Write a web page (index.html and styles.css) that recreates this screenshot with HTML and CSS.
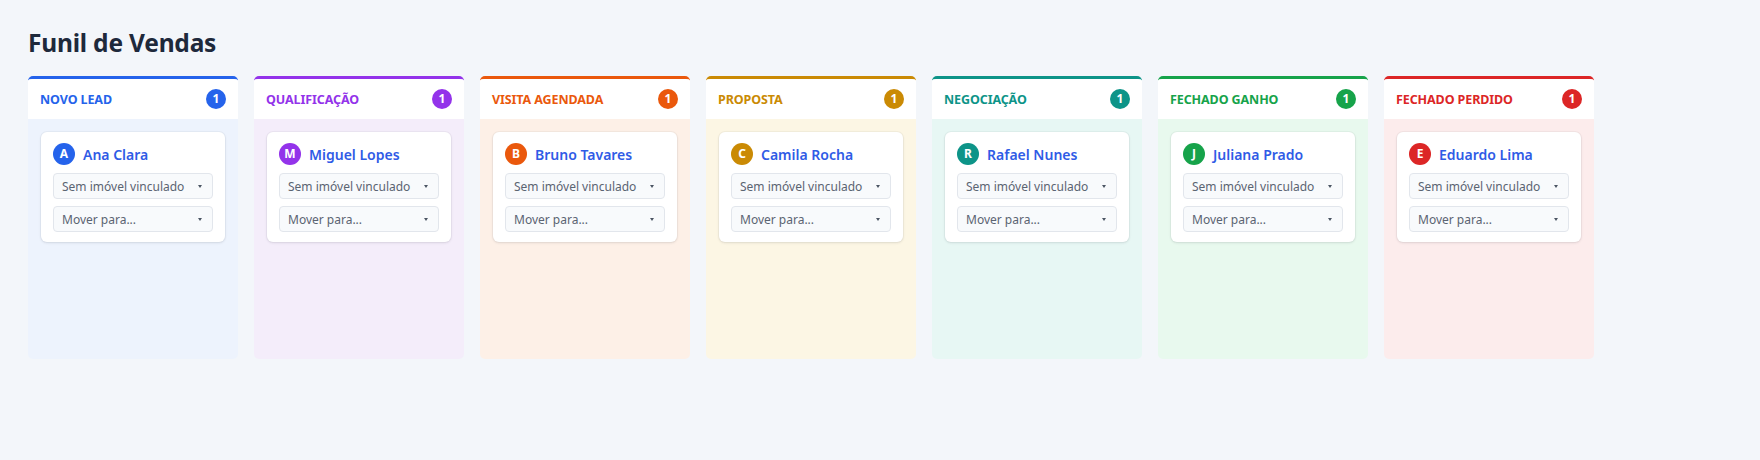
FILE: index.html
```html
<!DOCTYPE html>
<html lang="pt-BR">
<head>
<meta charset="utf-8">
<title>Funil de Vendas</title>
<link rel="stylesheet" href="styles.css">
</head>
<body>
<main class="page">
  <h1 class="title">Funil de Vendas</h1>
  <div class="board">
    <section class="col c-blue">
      <header class="col-head"><span class="col-title">NOVO LEAD</span><span class="badge">1</span></header>
      <div class="col-body">
        <div class="card">
          <div class="lead"><span class="avatar">A</span><span class="name">Ana Clara</span></div>
          <div class="sel"><select><option>Sem imóvel vinculado</option></select><span class="arrow"></span></div>
          <div class="sel"><select><option>Mover para...</option></select><span class="arrow"></span></div>
        </div>
      </div>
    </section>
    <section class="col c-purple">
      <header class="col-head"><span class="col-title">QUALIFICAÇÃO</span><span class="badge">1</span></header>
      <div class="col-body">
        <div class="card">
          <div class="lead"><span class="avatar">M</span><span class="name">Miguel Lopes</span></div>
          <div class="sel"><select><option>Sem imóvel vinculado</option></select><span class="arrow"></span></div>
          <div class="sel"><select><option>Mover para...</option></select><span class="arrow"></span></div>
        </div>
      </div>
    </section>
    <section class="col c-orange">
      <header class="col-head"><span class="col-title">VISITA AGENDADA</span><span class="badge">1</span></header>
      <div class="col-body">
        <div class="card">
          <div class="lead"><span class="avatar">B</span><span class="name">Bruno Tavares</span></div>
          <div class="sel"><select><option>Sem imóvel vinculado</option></select><span class="arrow"></span></div>
          <div class="sel"><select><option>Mover para...</option></select><span class="arrow"></span></div>
        </div>
      </div>
    </section>
    <section class="col c-yellow">
      <header class="col-head"><span class="col-title">PROPOSTA</span><span class="badge">1</span></header>
      <div class="col-body">
        <div class="card">
          <div class="lead"><span class="avatar">C</span><span class="name">Camila Rocha</span></div>
          <div class="sel"><select><option>Sem imóvel vinculado</option></select><span class="arrow"></span></div>
          <div class="sel"><select><option>Mover para...</option></select><span class="arrow"></span></div>
        </div>
      </div>
    </section>
    <section class="col c-teal">
      <header class="col-head"><span class="col-title">NEGOCIAÇÃO</span><span class="badge">1</span></header>
      <div class="col-body">
        <div class="card">
          <div class="lead"><span class="avatar">R</span><span class="name">Rafael Nunes</span></div>
          <div class="sel"><select><option>Sem imóvel vinculado</option></select><span class="arrow"></span></div>
          <div class="sel"><select><option>Mover para...</option></select><span class="arrow"></span></div>
        </div>
      </div>
    </section>
    <section class="col c-green">
      <header class="col-head"><span class="col-title">FECHADO GANHO</span><span class="badge">1</span></header>
      <div class="col-body">
        <div class="card">
          <div class="lead"><span class="avatar">J</span><span class="name">Juliana Prado</span></div>
          <div class="sel"><select><option>Sem imóvel vinculado</option></select><span class="arrow"></span></div>
          <div class="sel"><select><option>Mover para...</option></select><span class="arrow"></span></div>
        </div>
      </div>
    </section>
    <section class="col c-red">
      <header class="col-head"><span class="col-title">FECHADO PERDIDO</span><span class="badge">1</span></header>
      <div class="col-body">
        <div class="card">
          <div class="lead"><span class="avatar">E</span><span class="name">Eduardo Lima</span></div>
          <div class="sel"><select><option>Sem imóvel vinculado</option></select><span class="arrow"></span></div>
          <div class="sel"><select><option>Mover para...</option></select><span class="arrow"></span></div>
        </div>
      </div>
    </section>
  </div>
</main>
</body>
</html>
```

FILE: styles.css
```css
* { box-sizing: border-box; }
html, body { margin: 0; padding: 0; }
body {
  background: #f3f6fa;
  font-family: "Noto Sans", "Open Sans", sans-serif;
  color: #1f2937;
  width: 1760px;
  height: 460px;
}
.page { padding: 24px 28px; }
.title {
  margin: 0 0 14px;
  font-size: 24.5px;
  line-height: 38px;
  font-weight: 700;
  color: #1e293b;
  letter-spacing: -0.2px;
}
.board { display: flex; gap: 16px; align-items: flex-start; }
.col {
  width: 210px;
  height: 283px;
  border-top: 3px solid var(--c);
  border-radius: 5px;
  overflow: hidden;
  background: var(--bg);
  display: flex;
  flex-direction: column;
}
.col-head {
  height: 40px;
  background: #fff;
  padding: 0 12px;
  display: flex;
  align-items: center;
  justify-content: space-between;
}
.col-title {
  font-size: 12.5px;
  font-weight: 700;
  color: var(--c);
  letter-spacing: -0.1px;
}
.badge {
  width: 20px;
  height: 20px;
  border-radius: 50%;
  background: var(--c);
  color: #fff;
  font-size: 12px;
  font-weight: 700;
  display: flex;
  align-items: center;
  justify-content: center;
  line-height: 1;
}
.col-body { padding: 13px; }
.card {
  background: #fff;
  border-radius: 6px;
  padding: 11px 12px 10px;
  box-shadow: 0 1px 3px rgba(15, 23, 42, 0.10), 0 0 0 1px rgba(15, 23, 42, 0.03);
  display: flex;
  flex-direction: column;
  gap: 7px;
}
.lead { display: flex; align-items: center; gap: 8px; margin-bottom: 1px; }
.avatar {
  width: 22px;
  height: 22px;
  border-radius: 50%;
  background: var(--c);
  color: #fff;
  font-size: 12px;
  font-weight: 700;
  display: flex;
  align-items: center;
  justify-content: center;
  line-height: 1;
}
.name {
  font-size: 14px;
  font-weight: 600;
  color: #2f5be6;
}
.sel { position: relative; }
.sel select {
  -webkit-appearance: none;
  appearance: none;
  width: 100%;
  height: 26px;
  border: 1px solid #e2e6ec;
  border-radius: 4px;
  background: #f8fafc;
  padding: 0 20px 0 8px;
  font-family: "Noto Sans", "Open Sans", sans-serif;
  font-size: 12px;
  color: #5b6472;
  outline: none;
}
.arrow {
  position: absolute;
  right: 11px;
  top: 12px;
  width: 0;
  height: 0;
  border-left: 2px solid transparent;
  border-right: 2px solid transparent;
  border-top: 3px solid #4b5563;
  pointer-events: none;
}
.c-blue   { --c: #2563eb; --bg: #edf3fd; }
.c-purple { --c: #9333ea; --bg: #f4edfa; }
.c-orange { --c: #ea580c; --bg: #fdf0e7; }
.c-yellow { --c: #ca8a04; --bg: #fcf6e4; }
.c-teal   { --c: #0d9488; --bg: #e7f7f4; }
.c-green  { --c: #16a34a; --bg: #e8f9ee; }
.c-red    { --c: #dc2626; --bg: #fcecec; }
```
